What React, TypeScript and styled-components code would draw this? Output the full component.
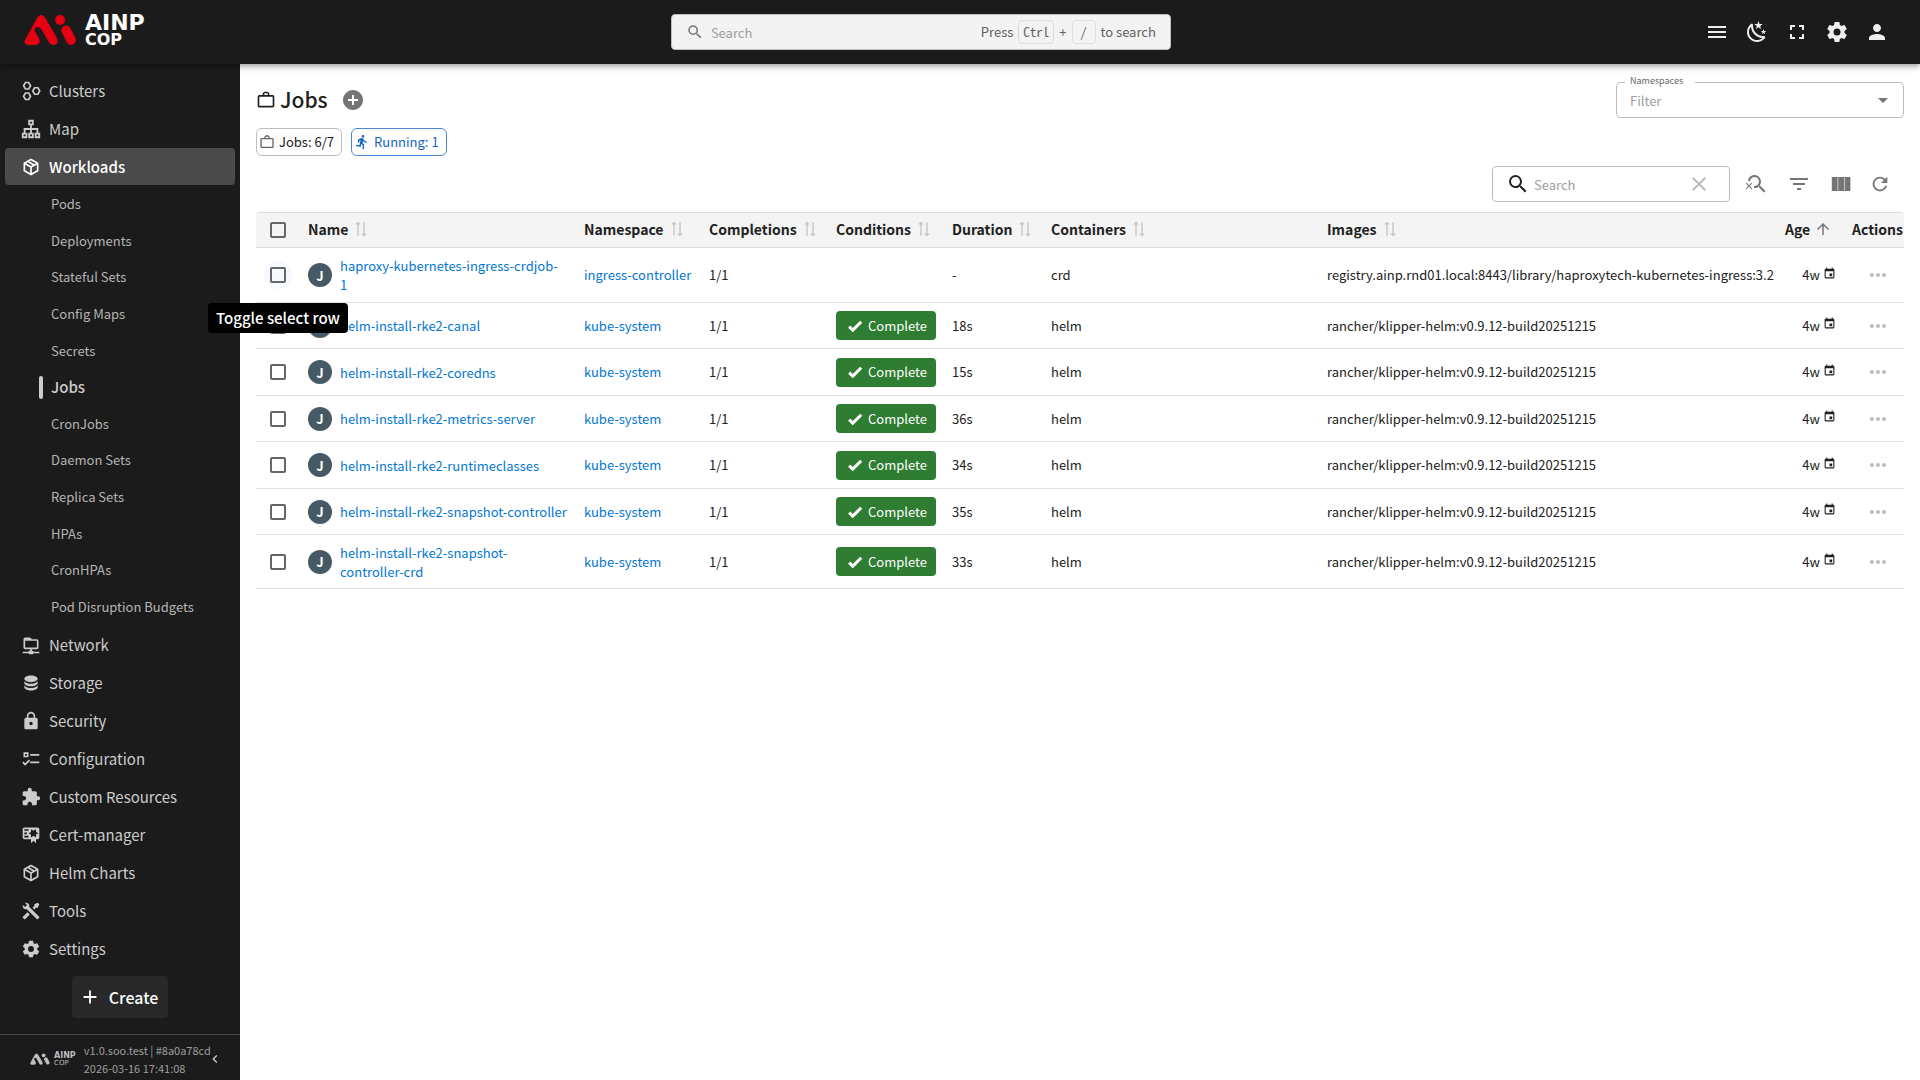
import React from "react";
import styled, { createGlobalStyle, css } from "styled-components";
import {
  MdAddCircle,
  MdArrowDropDown,
  MdArrowUpward,
  MdAdd,
  MdChevronLeft,
  MdClose,
  MdExtension,
  MdFilterList,
  MdFullscreen,
  MdLock,
  MdMenu,
  MdMoreHoriz,
  MdPerson,
  MdRefresh,
  MdSearch,
  MdSearchOff,
  MdSyncAlt,
  MdDirectionsRun,
} from "react-icons/md";

const GlobalStyle = createGlobalStyle`
  *, *::before, *::after { box-sizing: border-box; }
  body {
    margin: 0;
    background: #fff;
    color: #212121;
    font-family: "Noto Sans CJK KR", "Noto Sans CJK SC", "Noto Sans", sans-serif;
    font-size: 13px;
    line-height: 20px;
  }
  button, input { font: inherit; color: inherit; }
  button { background: none; border: 0; padding: 0; cursor: pointer; }
  a { color: inherit; text-decoration: none; }
  ul { list-style: none; margin: 0; padding: 0; }
`;

/* ---------- icons ---------- */

const paths = {
  box: "M21,16.5C21,16.88 20.79,17.21 20.47,17.38L12.57,21.82C12.41,21.94 12.21,22 12,22C11.79,22 11.59,21.94 11.43,21.82L3.53,17.38C3.21,17.21 3,16.88 3,16.5V7.5C3,7.12 3.21,6.79 3.53,6.62L11.43,2.18C11.59,2.06 11.79,2 12,2C12.21,2 12.41,2.06 12.57,2.18L20.47,6.62C20.79,6.79 21,7.12 21,7.5V16.5M12,4.15L10.11,5.22L16,8.61L17.96,7.5L12,4.15M6.04,7.5L12,10.85L13.96,9.75L8.08,6.35L6.04,7.5M5,15.91L11,19.29V12.58L5,9.21V15.91M19,15.91V9.21L13,12.58V19.29L19,15.91Z",
  network:
    "M15 20C15 19.45 14.55 19 14 19H13V17H19C20.1 17 21 16.1 21 15V7C21 5.9 20.1 5 19 5H13L11 3H5C3.9 3 3 3.9 3 5V15C3 16.1 3.9 17 5 17H11V19H10C9.45 19 9 19.45 9 20H2V22H9C9 22.55 9.45 23 10 23H14C14.55 23 15 22.55 15 22H22V20H15M5 15V7H19V15H5Z",
  database:
    "M12,3C7.58,3 4,4.79 4,7C4,9.21 7.58,11 12,11C16.42,11 20,9.21 20,7C20,4.79 16.42,3 12,3M4,9V12C4,14.21 7.58,16 12,16C16.42,16 20,14.21 20,12V9C20,11.21 16.42,13 12,13C7.58,13 4,11.21 4,9M4,14V17C4,19.21 7.58,21 12,21C16.42,21 20,19.21 20,17V14C20,16.21 16.42,18 12,18C7.58,18 4,16.21 4,14Z",
  checks:
    "M3 4H9V10H3V4M5 6V8H7V6H5M11 6H22V8H11V6M11 15H22V17H11V15M5 20L1.5 16.5L2.91 15.09L5 17.17L9.59 12.59L11 14L5 20Z",
  certificate:
    "M4,3C2.89,3 2,3.89 2,5V15A2,2 0 0,0 4,17H12V22L15,19L18,22V17H20A2,2 0 0,0 22,15V8L22,6V5A2,2 0 0,0 20,3H16V3H4M12,5L15,7L18,5V8.5L21,10L18,11.5V15L15,13L12,15V11.5L9,10L12,8.5V5M4,5H9V7H4V5M4,9H7V11H4V9M4,13H9V15H4V13Z",
  tools:
    "M21.71 20.29L20.29 21.71A1 1 0 0 1 18.88 21.71L7 9.85A3.81 3.81 0 0 1 6 10A4 4 0 0 1 2.22 4.7L4.76 7.24L5.29 6.71L6.71 5.29L7.24 4.76L4.7 2.22A4 4 0 0 1 10 6A3.81 3.81 0 0 1 9.85 7L21.71 18.88A1 1 0 0 1 21.71 20.29M2.29 18.88A1 1 0 0 0 2.29 20.29L3.71 21.71A1 1 0 0 0 5.12 21.71L10.59 16.25L7.76 13.42M20 2L16 4V6L13.83 8.17L15.83 10.17L18 8H20L22 4Z",
  cog: "M12,15.5A3.5,3.5 0 0,1 8.5,12A3.5,3.5 0 0,1 12,8.5A3.5,3.5 0 0,1 15.5,12A3.5,3.5 0 0,1 12,15.5M19.43,12.97C19.47,12.65 19.5,12.33 19.5,12C19.5,11.67 19.47,11.34 19.43,11L21.54,9.37C21.73,9.22 21.78,8.95 21.66,8.73L19.66,5.27C19.54,5.05 19.27,4.96 19.05,5.05L16.56,6.05C16.04,5.66 15.5,5.32 14.87,5.07L14.5,2.42C14.46,2.18 14.25,2 14,2H10C9.75,2 9.54,2.18 9.5,2.42L9.13,5.07C8.5,5.32 7.96,5.66 7.44,6.05L4.95,5.05C4.73,4.96 4.46,5.05 4.34,5.27L2.34,8.73C2.21,8.95 2.27,9.22 2.46,9.37L4.57,11C4.53,11.34 4.5,11.67 4.5,12C4.5,12.33 4.53,12.65 4.57,12.97L2.46,14.63C2.27,14.78 2.21,15.05 2.34,15.27L4.34,18.73C4.46,18.95 4.73,19.03 4.95,18.95L7.44,17.94C7.96,18.34 8.5,18.68 9.13,18.93L9.5,21.58C9.54,21.82 9.75,22 10,22H14C14.25,22 14.46,21.82 14.5,21.58L14.87,18.93C15.5,18.67 16.04,18.34 16.56,17.94L19.05,18.95C19.27,19.03 19.54,18.95 19.66,18.73L21.66,15.27C21.78,15.05 21.73,14.78 21.54,14.63L19.43,12.97Z",
  briefcase:
    "M20,6H16V4L14,2H10L8,4V6H4A2,2 0 0,0 2,8V19A2,2 0 0,0 4,21H20A2,2 0 0,0 22,19V8A2,2 0 0,0 20,6M10,4H14V6H10V4M20,19H4V8H20V19Z",
  night:
    "M17.75,4.09L15.22,6.03L16.13,9.09L13.5,7.28L10.87,9.09L11.78,6.03L9.25,4.09L12.44,4L13.5,1L14.56,4L17.75,4.09M21.25,11L19.61,12.25L20.2,14.23L18.5,13.06L16.8,14.23L17.39,12.25L15.75,11L17.81,10.95L18.5,9L19.19,10.95L21.25,11M18.97,15.95C19.8,15.87 20.69,17.05 20.16,17.8C19.84,18.25 19.5,18.67 19.08,19.07C15.17,23 8.84,23 4.94,19.07C1.03,15.17 1.03,8.83 4.94,4.93C5.34,4.53 5.76,4.17 6.21,3.85C6.96,3.32 8.14,4.21 8.06,5.04C7.79,7.9 8.75,10.87 10.95,13.06C13.14,15.26 16.1,16.22 18.97,15.95M17.33,17.97C14.5,17.81 11.7,16.64 9.53,14.5C7.36,12.31 6.2,9.5 6.04,6.68C3.23,9.82 3.34,14.64 6.35,17.66C9.37,20.67 14.19,20.78 17.33,17.97Z",
  check: "M9,20.42L2.79,14.21L5.62,11.38L9,14.77L18.88,4.88L21.71,7.71L9,20.42Z",
  calendar:
    "M19,19H5V8H19M16,1V3H8V1H6V3H5C3.89,3 3,3.89 3,5V19A2,2 0 0,0 5,21H19A2,2 0 0,0 21,19V5C21,3.89 20.1,3 19,3H18V1M17,12H12V17H17V12Z",
  columns: "M2.8 5h5.8v14H2.8zM9.2 5H15v14H9.2zM15.6 5h5.8v14h-5.8z",
};

const Glyph = ({ name, size }: { name: keyof typeof paths; size: number }) => (
  <svg width={size} height={size} viewBox="0 0 24 24" fill="currentColor" aria-hidden="true">
    <path d={paths[name]} />
  </svg>
);

const HexagonsIcon = () => (
  <svg width="20" height="20" viewBox="0 0 24 24" fill="none" stroke="currentColor" strokeWidth="2" aria-hidden="true">
    <path d="M5.3 1.8h4l2.2 3.9-2.2 3.9h-4L3.1 5.7zM5.3 14.4h4l2.2 3.9-2.2 3.9h-4l-2.2-3.9zM16.3 8.1h4l2.2 3.9-2.2 3.9h-4L14.1 12z" />
  </svg>
);

const SitemapIcon = () => (
  <svg width="22" height="22" viewBox="0 0 24 24" fill="none" stroke="currentColor" strokeWidth="2" aria-hidden="true">
    <path d="M10 3h4v4h-4zM3 17h4v4H3zM10 17h4v4h-4zM17 17h4v4h-4zM12 7v10M5 17v-5h14v5" />
  </svg>
);

const LogoMark = ({ width, height }: { width: number; height: number }) => (
  <svg width={width} height={height} viewBox="70 42 160 96" fill="currentColor" aria-hidden="true">
    <path d="M84 135Q66 134 74 118L107 58Q122 32 137 58L169 113Q177 133 160 135Q151 136 145 127L125 92Q118 80 109 81Q100 84 104 96L115 114Q123 132 105 135Z" />
    <circle cx="179" cy="60" r="15" />
    <path d="M197 91L212 120" stroke="currentColor" strokeWidth="29" strokeLinecap="round" />
  </svg>
);

/* ---------- top bar ---------- */

const Header = styled.header`
  position: relative;
  z-index: 2;
  display: flex;
  justify-content: space-between;
  align-items: center;
  height: 64px;
  padding: 0 31px 0 24px;
  background: #1b1b1b;
  color: #eee;
  box-shadow: 0 2px 4px -1px rgba(0, 0, 0, 0.2), 0 4px 5px rgba(0, 0, 0, 0.14), 0 1px 10px rgba(0, 0, 0, 0.12);
`;

const Brand = styled.a<{ $small?: boolean }>`
  display: flex;
  align-items: center;
  gap: ${(p) => (p.$small ? 4 : 8)}px;
  color: ${(p) => (p.$small ? "#bdbdbd" : "#e60012")};
  padding-bottom: ${(p) => (p.$small ? 0 : 4)}px;
`;

const BrandText = styled.span<{ $small?: boolean }>`
  display: flex;
  flex-direction: column;
  color: ${(p) => (p.$small ? "#bdbdbd" : "#fff")};
  font-family: "DejaVu Sans", sans-serif;
  font-weight: 700;
  font-size: ${(p) => (p.$small ? 8 : 22)}px;
  line-height: ${(p) => (p.$small ? 8 : 20)}px;
  small {
    font-weight: ${(p) => (p.$small ? 400 : 700)};
    font-size: ${(p) => (p.$small ? 7 : 16)}px;
    line-height: ${(p) => (p.$small ? 6 : 14)}px;
  }
`;

const GlobalSearch = styled.label`
  display: flex;
  align-items: center;
  width: 500px;
  height: 36px;
  padding: 0 14px;
  border: 1px solid #bdbdbd;
  border-radius: 4px;
  background: #f3f3f3;
  color: #616161;
  > svg { color: #757575; margin-right: 7px; }
`;

const BareInput = styled.input`
  flex: 1;
  min-width: 0;
  border: 0;
  padding: 2px 0 0;
  outline: 0;
  background: transparent;
  &::placeholder { color: #9e9e9e; opacity: 1; }
`;

const Hint = styled.span`
  display: flex;
  align-items: center;
  gap: 5px;
`;

const Key = styled.kbd`
  height: 24px;
  min-width: 24px;
  padding: 0 4px;
  border: 1px solid #dcdcdc;
  border-radius: 4px;
  text-align: center;
  font-family: "Noto Sans Mono CJK KR", "Liberation Mono", monospace;
  font-size: 13px;
  line-height: 22px;
`;

const HeaderActions = styled.nav`
  display: flex;
  align-items: center;
  gap: 16px;
  padding-left: 8px;
`;

const IconButton = styled.button<{ $tone?: string }>`
  display: inline-flex;
  align-items: center;
  justify-content: center;
  width: 24px;
  height: 24px;
  color: ${(p) => p.$tone ?? "inherit"};
`;

/* ---------- side bar ---------- */

const Shell = styled.div`
  display: flex;
  flex-direction: column;
  min-height: 100vh;
`;

const Body = styled.div`
  display: flex;
  flex: 1;
`;

const Sidebar = styled.aside`
  display: flex;
  flex-direction: column;
  width: 240px;
  flex: none;
  padding-top: 8px;
  background: #1b1b1b;
  color: #ccc;
`;

const Menu = styled.ul`
  display: flex;
  flex-direction: column;
  gap: 1px;
  padding: 0 5px;
`;

const MenuLink = styled.a<{ $active?: boolean }>`
  display: flex;
  align-items: center;
  height: 37px;
  padding-left: 15px;
  border-radius: 4px;
  font-size: 15px;
  ${(p) =>
    p.$active &&
    css`
      background: #4a4a4a;
      color: #fff;
      font-weight: 500;
    `}
`;

const MenuIcon = styled.span`
  display: flex;
  justify-content: center;
  width: 22px;
  margin-right: 7px;
`;

const SubMenu = styled.ul`
  display: flex;
  flex-direction: column;
  justify-content: space-between;
  height: 439px;
`;

const SubLink = styled.a<{ $active?: boolean }>`
  display: flex;
  align-items: center;
  height: 36px;
  padding-left: 46px;
  color: #b5b5b5;
  ${(p) =>
    p.$active &&
    css`
      padding-left: 34px;
      gap: 8px;
      color: #ccc;
      font-weight: 500;
      font-size: 15px;
      &::before {
        content: "";
        width: 4px;
        height: 23px;
        border-radius: 2px;
        background: #ccc;
      }
    `}
`;

const CreateButton = styled.button`
  display: flex;
  align-items: center;
  align-self: center;
  gap: 8px;
  height: 42px;
  margin-top: 9px;
  padding: 0 10px 0 7px;
  border-radius: 4px;
  background: #282828;
  color: #fff;
  font-size: 16px;
  font-weight: 500;
`;

const SidebarFooter = styled.footer`
  display: flex;
  align-items: center;
  height: 46px;
  margin-top: auto;
  padding: 2px 17px 0 30px;
  border-top: 1px solid #4a4a4a;
`;

const Version = styled.div`
  width: 123px;
  margin-left: 8px;
  color: #9e9e9e;
  font-size: 11px;
  line-height: 18px;
  white-space: nowrap;
`;

const CollapseButton = styled.button`
  display: flex;
`;

/* ---------- page ---------- */

const Main = styled.main`
  flex: 1;
  min-width: 0;
  padding: 18px 16px;
`;

const TitleRow = styled.div`
  display: flex;
  align-items: center;
  justify-content: space-between;
  height: 36px;
`;

const Title = styled.div`
  display: flex;
  align-items: center;
  h1 {
    margin: 0 13px 0 4px;
    padding-bottom: 2px;
    font-size: 21px;
    line-height: 30px;
    font-weight: 500;
  }
`;

const FilterBox = styled.fieldset`
  display: flex;
  align-items: center;
  width: 288px;
  height: 40px;
  margin: 0 0 4px;
  padding: 0 8px 3px 13px;
  border: 1px solid #bdbdbd;
  border-radius: 4px;
  legend {
    height: 8px;
    margin-left: -5px;
    padding: 0 12px 0 5px;
    color: #666;
    font-size: 9px;
    line-height: 6px;
  }
`;

const Chips = styled.div`
  display: flex;
  gap: 9px;
  margin-top: 10px;
`;

const Chip = styled.button<{ $blue?: boolean }>`
  display: flex;
  align-items: center;
  gap: 4px;
  height: 28px;
  padding: 0 7px 0 2px;
  border: 1px solid ${(p) => (p.$blue ? "#4a8bd6" : "#bdbdbd")};
  border-radius: 6px;
  color: ${(p) => (p.$blue ? "#1565c0" : "#212121")};
  svg { color: ${(p) => (p.$blue ? "inherit" : "#666")}; }
`;

const Toolbar = styled.div`
  display: flex;
  align-items: center;
  justify-content: flex-end;
  gap: 15px;
  height: 36px;
  margin: 10px 12px 10px 0;
`;

const ToolGroup = styled.div`
  display: flex;
  gap: 18px;
`;

const TableSearch = styled.label`
  display: flex;
  align-items: center;
  width: 238px;
  height: 36px;
  padding: 0 18px 0 13px;
  border: 1px solid #bdbdbd;
  border-radius: 4px;
  > svg { margin-right: 4px; }
`;

/* ---------- table ---------- */

const Table = styled.table`
  width: 100%;
  table-layout: fixed;
  border-collapse: separate;
  border-spacing: 0;
`;

const Th = styled.th`
  height: 36px;
  padding: 0 0 0 8px;
  border: solid #dcdcdc;
  border-width: 1px 0;
  background: #f4f4f4;
  text-align: left;
  font-size: 14px;
  font-weight: 700;
  white-space: nowrap;
  &:first-child { border-top-left-radius: 4px; }
  &:last-child { border-top-right-radius: 4px; }
`;

const HeadLabel = styled.span`
  display: flex;
  align-items: center;
  gap: 4px;
  padding-bottom: 2px;
`;

const SortButton = styled.button<{ $on?: boolean }>`
  display: flex;
  color: ${(p) => (p.$on ? "#757575" : "#c8c8c8")};
  svg { transform: ${(p) => (p.$on ? "none" : "rotate(-90deg)")}; }
`;

const Tr = styled.tr`
  height: 47px;
  &:nth-child(even) { height: 46px; }
  &:first-child { height: 55px; }
  &:last-child { height: 54px; }
`;

const Td = styled.td<{ $right?: boolean }>`
  padding: 7px 8px;
  border-bottom: 1px solid #e0e0e0;
  text-align: ${(p) => (p.$right ? "right" : "left")};
  vertical-align: middle;
  white-space: nowrap;
`;

const CheckCell = styled(Td)`
  padding: 0 0 0 8px;
`;

const CheckWrap = styled.span<{ $hover?: boolean }>`
  position: relative;
  display: flex;
  align-items: center;
  justify-content: center;
  width: 28px;
  height: 28px;
  border-radius: 50%;
  background: ${(p) => (p.$hover ? "#f5f9ff" : "transparent")};
`;

const Checkbox = styled.input`
  appearance: none;
  width: 16px;
  height: 16px;
  margin: 0;
  border: 2px solid #666;
  border-radius: 2px;
`;

const Tooltip = styled.span`
  position: absolute;
  z-index: 3;
  top: 42px;
  left: 50%;
  transform: translateX(-50%);
  padding: 3px 8px;
  border-radius: 4px;
  background: #000;
  color: #fff;
  font-size: 15px;
  line-height: 24px;
  font-weight: 500;
  white-space: nowrap;
`;

const NameCell = styled.div`
  display: flex;
  align-items: center;
  gap: 8px;
  line-height: 19px;
  white-space: pre-line;
`;

const Avatar = styled.span`
  display: flex;
  align-items: center;
  justify-content: center;
  flex: none;
  width: 24px;
  height: 24px;
  border-radius: 50%;
  background: #455a64;
  color: #fff;
  font-weight: 700;
`;

const Link = styled.a`
  color: #0277d4;
`;

const Status = styled.span`
  display: flex;
  align-items: center;
  gap: 4px;
  width: max-content;
  height: 29px;
  padding: 0 9px 0 10px;
  border-radius: 4px;
  background: #2e7d32;
  color: #fff;
`;

const Age = styled.span`
  display: inline-flex;
  align-items: center;
  gap: 3px;
  svg { margin-bottom: 4px; }
`;

const ActionButton = styled(IconButton)`
  display: flex;
  margin-left: 14px;
`;

/* ---------- data ---------- */

const topItems: { label: string; icon: React.ReactNode; active?: boolean }[] = [
  { label: "Clusters", icon: <HexagonsIcon /> },
  { label: "Map", icon: <SitemapIcon /> },
  { label: "Workloads", icon: <Glyph name="box" size={20} />, active: true },
];

const subItems = [
  "Pods",
  "Deployments",
  "Stateful Sets",
  "Config Maps",
  "Secrets",
  "Jobs",
  "CronJobs",
  "Daemon Sets",
  "Replica Sets",
  "HPAs",
  "CronHPAs",
  "Pod Disruption Budgets",
];

const bottomItems: { label: string; icon: React.ReactNode }[] = [
  { label: "Network", icon: <Glyph name="network" size={20} /> },
  { label: "Storage", icon: <Glyph name="database" size={20} /> },
  { label: "Security", icon: <MdLock size={20} /> },
  { label: "Configuration", icon: <Glyph name="checks" size={20} /> },
  { label: "Custom Resources", icon: <MdExtension size={20} /> },
  { label: "Cert-manager", icon: <Glyph name="certificate" size={20} /> },
  { label: "Helm Charts", icon: <Glyph name="box" size={20} /> },
  { label: "Tools", icon: <Glyph name="tools" size={20} /> },
  { label: "Settings", icon: <Glyph name="cog" size={20} /> },
];

const columns: { label: string; width?: number }[] = [
  { label: "Name", width: 276 },
  { label: "Namespace", width: 125 },
  { label: "Completions", width: 127 },
  { label: "Conditions", width: 116 },
  { label: "Duration", width: 99 },
  { label: "Containers", width: 276 },
  { label: "Images" },
];

const klipper = "rancher/klipper-helm:v0.9.12-build20251215";
const jobs = [
  {
    name: "haproxy-kubernetes-ingress-crdjob-\n1",
    ns: "ingress-controller",
    duration: "-",
    container: "crd",
    image: "registry.ainp.rnd01.local:8443/library/haproxytech-kubernetes-ingress:3.2",
  },
  { name: "helm-install-rke2-canal", ns: "kube-system", done: true, duration: "18s", container: "helm", image: klipper },
  { name: "helm-install-rke2-coredns", ns: "kube-system", done: true, duration: "15s", container: "helm", image: klipper },
  { name: "helm-install-rke2-metrics-server", ns: "kube-system", done: true, duration: "36s", container: "helm", image: klipper },
  { name: "helm-install-rke2-runtimeclasses", ns: "kube-system", done: true, duration: "34s", container: "helm", image: klipper },
  { name: "helm-install-rke2-snapshot-controller", ns: "kube-system", done: true, duration: "35s", container: "helm", image: klipper },
  { name: "helm-install-rke2-snapshot-controller-crd", ns: "kube-system", done: true, duration: "33s", container: "helm", image: klipper },
];

const TopBar = () => (
  <Header>
    <Brand href="#">
      <LogoMark width={53} height={32} />
      <BrandText>
        AINP<small>COP</small>
      </BrandText>
    </Brand>
    <GlobalSearch>
      <MdSearch size={18} />
      <BareInput placeholder="Search" aria-label="Search resources" />
      <Hint>
        Press <Key>Ctrl</Key>+<Key>/</Key> to search
      </Hint>
    </GlobalSearch>
    <HeaderActions>
      <IconButton aria-label="Menu"><MdMenu size={24} /></IconButton>
      <IconButton aria-label="Change theme"><Glyph name="night" size={24} /></IconButton>
      <IconButton aria-label="Full screen"><MdFullscreen size={24} /></IconButton>
      <IconButton aria-label="Settings"><Glyph name="cog" size={24} /></IconButton>
      <IconButton aria-label="Account"><MdPerson size={24} /></IconButton>
    </HeaderActions>
  </Header>
);

const MenuEntry = ({ label, icon, active }: { label: string; icon: React.ReactNode; active?: boolean }) => (
  <li>
    <MenuLink href="#" $active={active}>
      <MenuIcon>{icon}</MenuIcon>
      {label}
    </MenuLink>
  </li>
);

const SideBar = () => (
  <Sidebar>
    <Menu>
      {topItems.map((item) => (
        <MenuEntry key={item.label} {...item} />
      ))}
      <li>
        <SubMenu>
          {subItems.map((label) => (
            <li key={label}>
              <SubLink href="#" $active={label === "Jobs"}>{label}</SubLink>
            </li>
          ))}
        </SubMenu>
      </li>
      {bottomItems.map((item) => (
        <MenuEntry key={item.label} {...item} />
      ))}
    </Menu>
    <CreateButton>
      <MdAdd size={22} />
      Create
    </CreateButton>
    <SidebarFooter>
      <Brand href="#" $small>
        <LogoMark width={20} height={12} />
        <BrandText $small>
          AINP<small>COP</small>
        </BrandText>
      </Brand>
      <Version>
        v1.0.soo.test | #8a0a78cd
        <br />
        2026-03-16 17:41:08
      </Version>
      <CollapseButton aria-label="Collapse sidebar"><MdChevronLeft size={16} /></CollapseButton>
    </SidebarFooter>
  </Sidebar>
);

const JobsTable = () => (
  <Table>
    <colgroup>
      <col width={44} />
      {columns.map((c) => (
        <col key={c.label} width={c.width} />
      ))}
      <col width={67} />
      <col width={60} />
    </colgroup>
    <thead>
      <tr>
        <Th>
          <CheckWrap>
            <Checkbox type="checkbox" aria-label="Toggle select all" />
          </CheckWrap>
        </Th>
        {columns.map((c) => (
          <Th key={c.label}>
            <HeadLabel>
              {c.label}
              <SortButton aria-label={`Sort by ${c.label}`}><MdSyncAlt size={18} /></SortButton>
            </HeadLabel>
          </Th>
        ))}
        <Th>
          <HeadLabel>
            Age
            <SortButton $on aria-label="Sort by Age"><MdArrowUpward size={18} /></SortButton>
          </HeadLabel>
        </Th>
        <Th>
          <HeadLabel>Actions</HeadLabel>
        </Th>
      </tr>
    </thead>
    <tbody>
      {jobs.map((job, i) => (
        <Tr key={job.name}>
          <CheckCell>
            <CheckWrap $hover={i === 0}>
              <Checkbox type="checkbox" aria-label={`Select ${job.name}`} />
              {i === 0 && <Tooltip role="tooltip">Toggle select row</Tooltip>}
            </CheckWrap>
          </CheckCell>
          <Td>
            <NameCell>
              <Avatar>J</Avatar>
              <Link href="#">{job.name}</Link>
            </NameCell>
          </Td>
          <Td><Link href="#">{job.ns}</Link></Td>
          <Td>1/1</Td>
          <Td>
            {job.done && (
              <Status>
                <Glyph name="check" size={18} />
                Complete
              </Status>
            )}
          </Td>
          <Td>{job.duration}</Td>
          <Td>{job.container}</Td>
          <Td>{job.image}</Td>
          <Td $right>
            <Age>
              4w
              <Glyph name="calendar" size={13} />
            </Age>
          </Td>
          <Td>
            <ActionButton $tone="#bdbdbd" aria-label={`Actions for ${job.name}`}><MdMoreHoriz size={24} /></ActionButton>
          </Td>
        </Tr>
      ))}
    </tbody>
  </Table>
);

export default function App() {
  return (
    <Shell>
      <GlobalStyle />
      <TopBar />
      <Body>
        <SideBar />
        <Main>
          <TitleRow>
            <Title>
              <Glyph name="briefcase" size={20} />
              <h1>Jobs</h1>
              <IconButton $tone="#757575" aria-label="Create job"><MdAddCircle size={24} /></IconButton>
            </Title>
            <FilterBox>
              <legend>Namespaces</legend>
              <BareInput placeholder="Filter" aria-label="Namespaces" />
              <IconButton $tone="#757575" aria-label="Open namespaces"><MdArrowDropDown size={24} /></IconButton>
            </FilterBox>
          </TitleRow>
          <Chips>
            <Chip><Glyph name="briefcase" size={16} />Jobs: 6/7</Chip>
            <Chip $blue><MdDirectionsRun size={16} />Running: 1</Chip>
          </Chips>
          <Toolbar>
            <TableSearch>
              <MdSearch size={24} />
              <BareInput placeholder="Search" aria-label="Search jobs" />
              <IconButton $tone="#bdbdbd" aria-label="Clear search"><MdClose size={24} /></IconButton>
            </TableSearch>
            <ToolGroup>
              <IconButton $tone="#757575" aria-label="Toggle search"><MdSearchOff size={24} /></IconButton>
              <IconButton $tone="#757575" aria-label="Filters"><MdFilterList size={24} /></IconButton>
              <IconButton $tone="#757575" aria-label="Columns"><Glyph name="columns" size={24} /></IconButton>
            </ToolGroup>
            <IconButton $tone="#757575" aria-label="Refresh"><MdRefresh size={22} /></IconButton>
          </Toolbar>
          <JobsTable />
        </Main>
      </Body>
    </Shell>
  );
}
